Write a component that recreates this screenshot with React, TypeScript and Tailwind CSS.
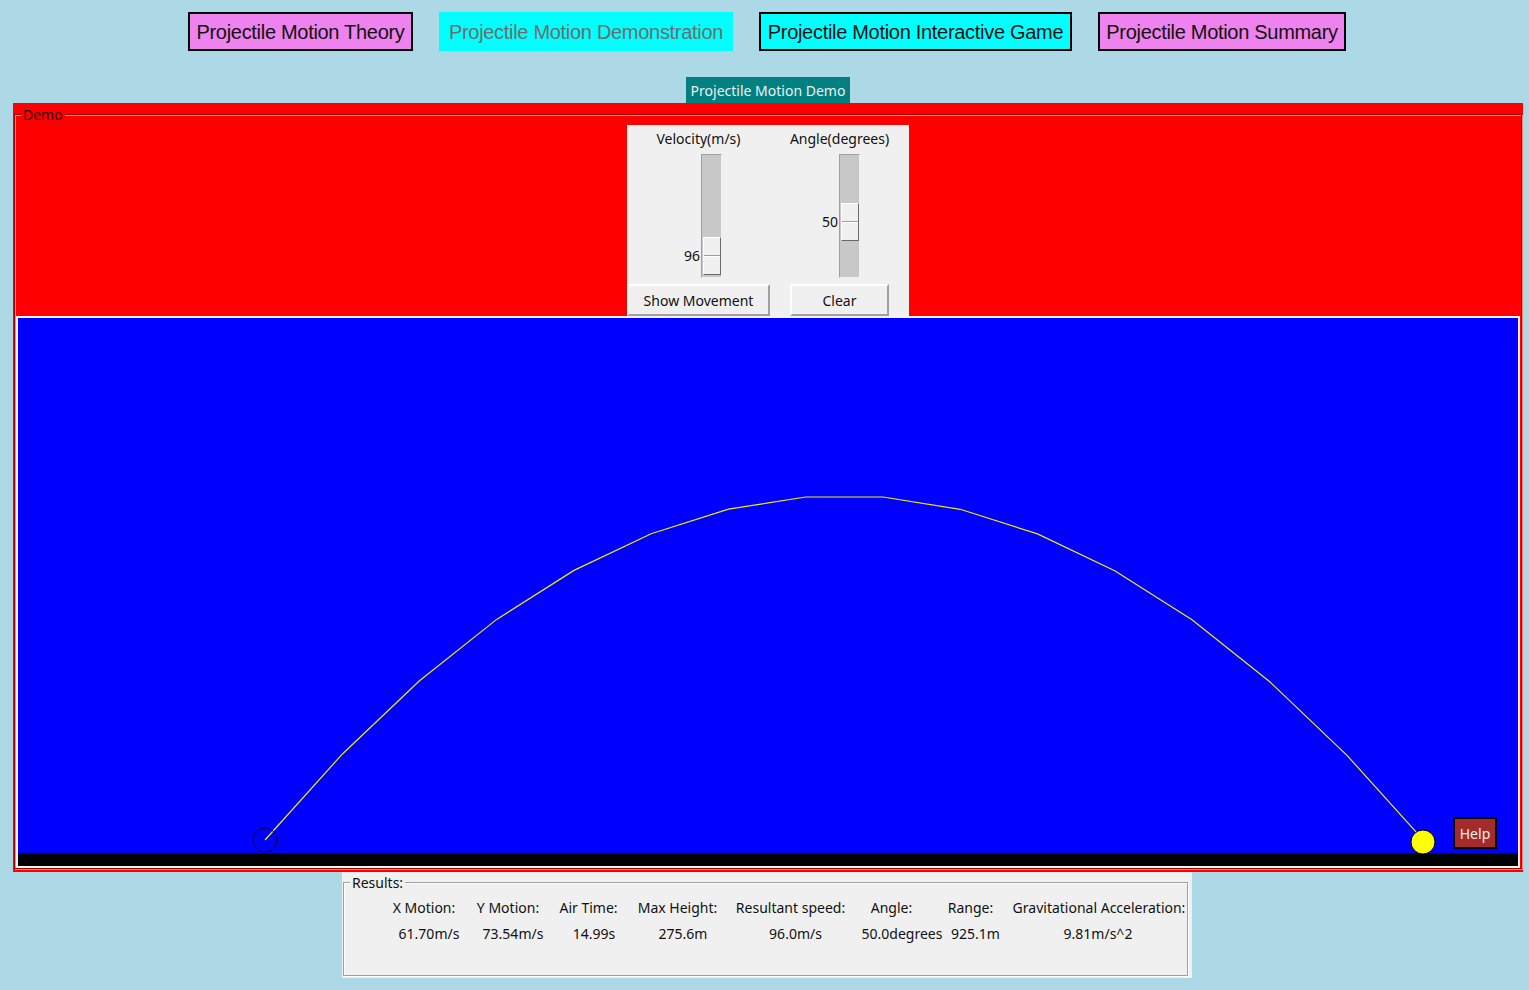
import React from "react";

const ui = "font-['Noto_Sans',sans-serif]";
const arial = "font-['Liberation_Sans',Arial,sans-serif]";

const navButtons = [
  { label: "Projectile Motion Theory", cls: "w-[225px] border-2 border-black bg-[#ee82ee] text-[#111]" },
  { label: "Projectile Motion Demonstration", cls: "w-[294px] bg-[#00ffff] text-[#6d6d6d]" },
  { label: "Projectile Motion Interactive Game", cls: "w-[313px] border-2 border-black bg-[#00ffff] text-[#111]" },
  { label: "Projectile Motion Summary", cls: "w-[248px] border-2 border-black bg-[#ee82ee] text-[#111]" },
];

const results = [
  { head: "X Motion:", value: "61.70m/s", col: "w-[84px]", shift: "pl-[10px]" },
  { head: "Y Motion:", value: "73.54m/s", col: "w-[84px]", shift: "pl-[10px]" },
  { head: "Air Time:", value: "14.99s", col: "w-[77px]", shift: "pl-[11px]" },
  { head: "Max Height:", value: "275.6m", col: "w-[101px]", shift: "pl-[11px]" },
  { head: "Resultant speed:", value: "96.0m/s", col: "w-[125px]", shift: "pl-[10px]" },
  { head: "Angle:", value: "50.0degrees", col: "w-[77px]", shift: "pl-[21px]" },
  { head: "Range:", value: "925.1m", col: "w-[81px]", shift: "pl-[10px]" },
  { head: "Gravitational Acceleration:", value: "9.81m/s^2", col: "w-[176px]", shift: "pr-[2px]" },
];

// trajectory in canvas coordinates (1 m ~ 1.25 px)
const vx = 61.7;
const vy = 73.54;
const g = 9.81;
const airTime = 14.99;
const x0 = 247;
const y0 = 522;
const at = (t: number) => [x0 + vx * t * 1.252, y0 - (vy * t - 0.5 * g * t * t) * 1.25];
const times: number[] = [];
for (let t = 0; t < airTime; t++) times.push(t);
times.push(airTime);
const path = times.map((t) => at(t).map((n) => n.toFixed(1)).join(",")).join(" ");

type ScaleProps = { value: number; max: number; pad: string };

const VScale = ({ value, max, pad }: ScaleProps) => {
  const top = 1 + (value / max) * 84;
  return (
    <div className={`flex ${pad} pt-[3px]`}>
      <div className="relative w-[21px] h-[124px] bg-[#c8c8c8] border border-t-[#a0a0a0] border-l-[#a0a0a0] border-r-[#f0f0f0] border-b-[#f0f0f0]">
        <span
          className="absolute right-[calc(100%+2px)] text-[14px] leading-[20px] text-[#111]"
          style={{ top: top + 9 }}
        >
          {value}
        </span>
        <div
          className="absolute left-px w-[18px] h-[38px] bg-[#f0f0f0] border border-t-white border-l-white border-r-[#696969] border-b-[#696969] flex flex-col justify-center"
          style={{ top }}
        >
          <div className="h-px bg-[#a0a0a0]" />
          <div className="h-px bg-white" />
        </div>
      </div>
    </div>
  );
};

const TkButton = ({ label, cls }: { label: string; cls: string }) => (
  <div
    className={`${cls} h-[32px] flex items-center justify-center text-[14px] text-[#111] bg-[#f0f0f0] border-2 border-t-white border-l-white border-r-[#a0a0a0] border-b-[#a0a0a0]`}
  >
    {label}
  </div>
);

export default function App() {
  return (
    <div className={`w-[1529px] h-[990px] bg-[#add8e6] overflow-hidden ${ui}`}>
      <div className="flex gap-[26px] pl-[188px] pt-[12px]">
        {navButtons.map((b) => (
          <div
            key={b.label}
            className={`${b.cls} h-[39px] flex items-center justify-center ${arial} text-[20px] tracking-[-0.3px]`}
          >
            {b.label}
          </div>
        ))}
      </div>

      <div className="ml-[686px] mt-[26px] w-[164px] h-[26px] bg-[#008080] text-[#f0f0f0] text-[14px] flex items-center justify-center">
        Projectile Motion Demo
      </div>

      <div className="ml-[13px] w-[1510px] h-[769px] bg-[#ff0000] pt-[11px] px-px">
        <div className="relative h-[755px] border border-[#a00000] shadow-[inset_1px_1px_0_#ff8080,1px_1px_0_#ff8080]">
          <span className="absolute left-[6px] -top-[10px] px-[2px] bg-[#ff0000] text-[14px] leading-[19px] text-[#1a0000]">
            Demo
          </span>

          <div className="mx-auto mt-[10px] w-[282px] h-[191px] bg-[#f0f0f0] grid grid-cols-[143px_139px] grid-rows-[26px_133px_32px]">
            <div className="flex items-center justify-center text-[14px] text-[#111]">Velocity(m/s)</div>
            <div className="flex items-center justify-center text-[14px] text-[#111]">Angle(degrees)</div>
            <VScale value={96} max={100} pad="pl-[74px]" />
            <VScale value={50} max={90} pad="pl-[69px]" />
            <TkButton label="Show Movement" cls="w-[143px]" />
            <div className="flex justify-center">
              <TkButton label="Clear" cls="w-[99px]" />
            </div>
          </div>

          <div className="relative mx-auto w-[1504px] h-[552px] border-2 border-[#f4f4f4] bg-[#0000ff]">
            <svg width="1500" height="548" className="block">
              <rect x="0" y="535" width="1500" height="13" fill="#000" />
              <polyline points={path} fill="none" stroke="#f0f000" strokeWidth="1.2" />
              <circle cx={x0} cy={y0} r="12" fill="none" stroke="#000040" strokeWidth="1" />
              <circle cx="1405" cy="524" r="12" fill="#ffff00" stroke="#000" strokeWidth="1" />
            </svg>
            <div className="absolute left-[1435px] top-[499px] w-[44px] h-[32px] bg-[#a52a2a] border-2 border-black text-[14px] text-[#f0f0f0] flex items-center justify-center">
              Help
            </div>
          </div>
        </div>
      </div>

      <div className="ml-[342px] w-[850px] h-[106px] bg-[#f0f0f0] pt-[10px] pl-px pr-[4px] pb-[2px]">
        <div className="relative h-full border border-[#a0a0a0] shadow-[inset_1px_1px_0_#fff,1px_1px_0_#fff]">
          <span className="absolute left-[6px] -top-[9px] px-[2px] bg-[#f0f0f0] text-[14px] leading-[18px] text-[#111]">
            Results:
          </span>
          <div className="pl-[38px] pt-[12px] text-[14px] text-[#111]">
            <div className="flex h-[24px]">
              {results.map((r) => (
                <div key={r.head} className={`${r.col} flex items-center justify-center whitespace-nowrap`}>
                  {r.head}
                </div>
              ))}
            </div>
            <div className="flex h-[28px]">
              {results.map((r) => (
                <div key={r.head} className={`${r.col} ${r.shift} flex items-center justify-center whitespace-nowrap`}>
                  {r.value}
                </div>
              ))}
            </div>
          </div>
        </div>
      </div>
    </div>
  );
}
